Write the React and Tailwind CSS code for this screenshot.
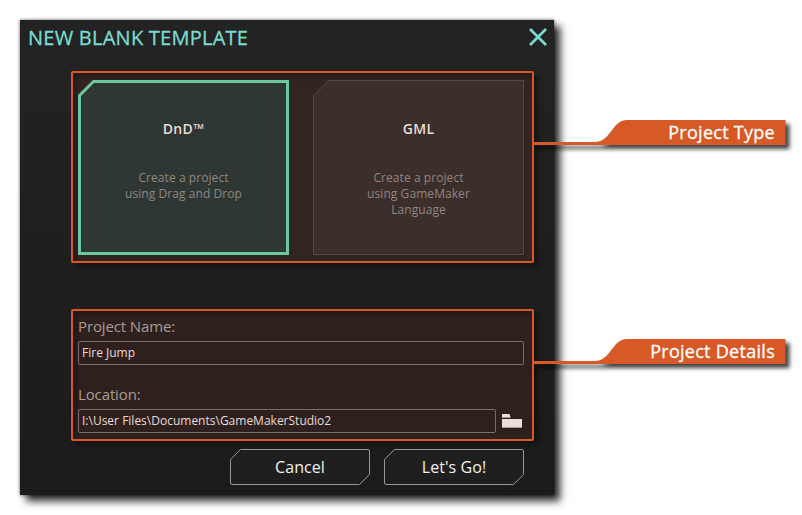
import React from 'react';

const FONT = "font-['Open_Sans','Noto_Sans',sans-serif]";

function Card({ selected, title, lines }) {
  return (
    <div className="relative h-[175px] w-[211px] text-center">
      <svg className="absolute inset-0" width="211" height="175" viewBox="0 0 211 175">
        {selected ? (
          <path d="M15.5 1.5H209.5V173.5H1.5V15.5Z" fill="#2f3734" stroke="#6bc79c" strokeWidth="3" />
        ) : (
          <path d="M15.5 .5H210.5V174.5H.5V15.5Z" fill="#3b2e2b" stroke="#554945" strokeWidth="1" />
        )}
      </svg>
      <div className="relative pt-[39px]">
        <div className="h-[20px] text-[14px] font-semibold leading-[20px] tracking-[0.35px] text-[#e8dcd8]">{title}</div>
        <div className="pt-[31px] text-[12px] leading-[16px] tracking-[0.07px] text-[#91867f]">
          {lines.map((line) => (
            <div key={line}>{line}</div>
          ))}
        </div>
      </div>
    </div>
  );
}

function DialogButton({ children }) {
  return (
    <button className="relative h-[36px] w-[140px] text-[16px] leading-[36px] tracking-[0.08px] text-[#f2f2f2]">
      <svg className="absolute inset-0" width="140" height="36" viewBox="0 0 140 36">
        <path
          d="M10.5 .5H138Q139.500 .5 139.500 2V25.500L129.500 35.500H2Q.5 35.500 .5 34V10.500Z"
          fill="#1f1f1f"
          stroke="#969696"
        />
      </svg>
      <span className="relative">{children}</span>
    </button>
  );
}

function Callout({ className, children }) {
  return (
    <div className={'absolute left-[533px] h-[25px] w-[252px] ' + className}>
      <svg
        className="absolute inset-0 overflow-visible drop-shadow-[4px_4px_2px_rgba(0,0,0,0.75)]"
        width="252"
        height="25"
        viewBox="0 0 252 25"
      >
        <path d="M0 22H62C78 22 79 0 94 0H252.500V25H0Z" fill="#d75926" />
      </svg>
      <div className="relative pr-[10px] text-right text-[18px] leading-[25px] tracking-[0.28px] text-white [-webkit-text-stroke:0.3px_#ffffff]">{children}</div>
    </div>
  );
}

export default function App() {
  return (
    <div className={'relative h-[515px] w-[802px] overflow-hidden bg-white p-[20px] ' + FONT}>
      <div className="flex h-[475px] w-[534px] flex-col bg-linear-to-b from-[#232323] to-[#1b1b1b] shadow-[6px_6px_8px_rgba(0,0,0,0.85),0_0_3px_rgba(0,0,0,0.6)]">
        <header className="flex h-[51px] justify-between pl-[8px] pr-[7px]">
          <h1 className="text-[20px] leading-[35px] tracking-[0.25px] text-[#79dbd0] [-webkit-text-stroke:0.3px_#79dbd0]">NEW BLANK TEMPLATE</h1>
          <svg className="mt-[8px]" width="18" height="18" viewBox="0 0 18 18">
            <path d="M1 1L17 17M17 1L1 17" stroke="#79dbd0" strokeWidth="2.700" />
          </svg>
        </header>

        <section className="ml-[51px] flex h-[192px] w-[463px] justify-between rounded-[2px] border-2 border-[#d75926] bg-[#322421] px-[5px] pr-[8px] pt-[7px] shadow-[4px_4px_5px_rgba(0,0,0,0.4),inset_4px_4px_5px_rgba(0,0,0,0.25)]">
          <Card selected title="DnD™" lines={['Create a project', 'using Drag and Drop']} />
          <Card title="GML" lines={['Create a project', 'using GameMaker', 'Language']} />
        </section>

        <section className="ml-[51px] mt-[46px] h-[132px] w-[463px] rounded-[2px] border-2 border-[#d75926] bg-[#2e201d] pl-[5px] pr-[8px] shadow-[4px_4px_5px_rgba(0,0,0,0.4),inset_4px_4px_5px_rgba(0,0,0,0.25)]">
          <div className="h-[30px] text-[15px] leading-[31px] tracking-[-0.12px] text-[#a99b96]">Project Name:</div>
          <div className="h-[24px] rounded-[2px] border border-[#7b6d69] pl-[3px] text-[12px] leading-[22px] text-[#e8dcd8]">Fire Jump</div>
          <div className="mt-[14px] h-[30px] text-[15px] leading-[31px] tracking-[-0.12px] text-[#a99b96]">Location:</div>
          <div className="flex">
            <div className="h-[24px] w-[418px] rounded-[2px] border border-[#7b6d69] pl-[3px] text-[12px] leading-[22px] text-[#e8dcd8]">
              I:\User Files\Documents\GameMakerStudio2
            </div>
            <svg className="ml-[6px] mt-[5px]" width="20" height="14" viewBox="0 0 20 14">
              <path d="M0 0H7.500L8.500 3H0ZM0 5H20V14H0Z" fill="#eadedb" />
              <path d="M0 3.500H8.500M0 13.500H20" stroke="#a99d9a" />
            </svg>
          </div>
        </section>

        <footer className="mt-[8px] flex justify-end gap-[14px] pr-[30px]">
          <DialogButton>Cancel</DialogButton>
          <DialogButton>Let's Go!</DialogButton>
        </footer>
      </div>

      <Callout className="top-[120px]">Project Type</Callout>
      <Callout className="top-[339px]">Project Details</Callout>
    </div>
  );
}
